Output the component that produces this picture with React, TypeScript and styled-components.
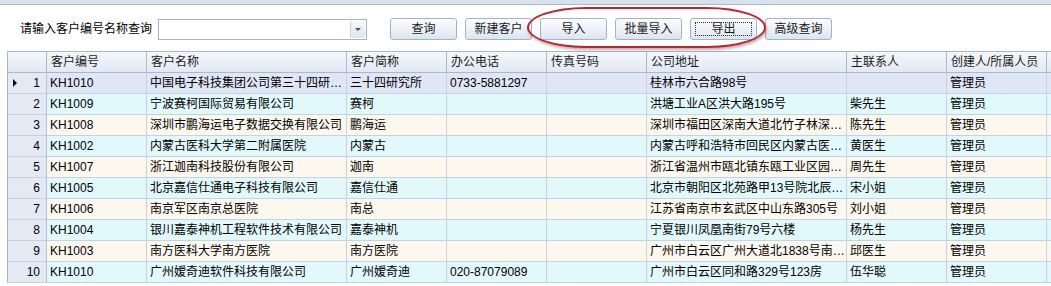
import React from 'react';
import styled, { createGlobalStyle } from 'styled-components';

const GlobalStyle = createGlobalStyle`
	html, body {
		margin: 0;
		padding: 0;
		background: #fff;
		overflow: hidden;
	}
	body {
		font-family: Tahoma, 'Liberation Sans', 'Noto Sans CJK SC', sans-serif;
		font-size: 12px;
		color: #000;
	}
`;

const Page = styled.div`
	width: 1051px;
	height: 286px;
	overflow: hidden;
	display: flex;
	flex-direction: column;
`;

const TopStrip = styled.div`
	height: 4px;
	background: #d8e2ee;
	border-bottom: 1px solid #a9b9cd;
`;

const Toolbar = styled.div`
	position: relative;
	display: flex;
	align-items: center;
	padding: 13px 0 11px 20px;
	height: 22px;
`;

const Label = styled.span`
	line-height: 22px;
	margin-right: 6px;
	white-space: nowrap;
`;

const Combo = styled.div`
	width: 209px;
	height: 21px;
	box-sizing: border-box;
	border: 1px solid #a3b4ca;
	background: #fff;
	display: flex;
	justify-content: flex-end;
	padding: 1px;
	margin-right: 23px;
`;

const ComboArrow = styled.div`
	width: 15px;
	height: 100%;
	box-sizing: border-box;
	border-left: 1px solid #c6d2e0;
	background: linear-gradient(#f6f8fb, #dfe6ef);
	display: flex;
	align-items: center;
	justify-content: center;

	&::after {
		content: '';
		border-left: 3px solid transparent;
		border-right: 3px solid transparent;
		border-top: 3px solid #4a5568;
	}
`;

const Buttons = styled.div`
	display: flex;
	gap: 8px;
`;

const Button = styled.button<{ $focused?: boolean }>`
	position: relative;
	width: 67px;
	height: 22px;
	box-sizing: border-box;
	border: 1px solid #a2b3c9;
	border-radius: 3px;
	background: linear-gradient(#fbfcfe, #eef2f8 50%, #dbe4ef);
	font: inherit;
	color: #1a1a1a;
	padding: 0;
	line-height: 20px;

	${(p) =>
		p.$focused &&
		`
		&::after {
			content: '';
			position: absolute;
			inset: 3px 4px;
			border: 1px dotted #333;
		}
	`}
`;

const Highlight = styled.div`
	position: absolute;
	left: 527px;
	top: 2px;
	width: 239px;
	height: 41px;
	box-sizing: border-box;
	border: 2px solid #c3232c;
	border-radius: 60px / 21px;
	box-shadow: 1px 2px 3px rgba(90, 90, 90, 0.45);
	pointer-events: none;
`;

const columns = '39px 100px 200px 100px 100px 100px 200px 100px 100px 100px';

const Grid = styled.div`
	margin-left: 7px;
	display: grid;
	grid-template-columns: ${columns};
	grid-auto-rows: 21px;
	border-top: 1px solid #a6b6cb;
	border-left: 1px solid #a6b6cb;
	width: max-content;
`;

const HeadCell = styled.div`
	box-sizing: border-box;
	background: linear-gradient(#f4f7fb, #e2e9f2);
	border-right: 1px solid #a9b8cc;
	border-bottom: 1px solid #a9b8cc;
	padding: 0 0 0 4px;
	line-height: 20px;
	white-space: nowrap;
	overflow: hidden;
	color: #1b1b1b;
`;

type RowKind = 'selected' | 'cyan' | 'beige';

const rowColors: Record<RowKind, string> = {
	selected: '#dfe6f5',
	cyan: '#e2f9fb',
	beige: '#fdf8ee',
};

const IndexCell = styled.div`
	box-sizing: border-box;
	background: #e3eaf4;
	border-right: 1px solid #b2c2d6;
	border-bottom: 1px solid #c3d1e1;
	padding: 0 6px 0 5px;
	line-height: 20px;
	display: flex;
	justify-content: space-between;
	align-items: center;
`;

const Marker = styled.span`
	width: 0;
	height: 0;
	border-top: 4px solid transparent;
	border-bottom: 4px solid transparent;
	border-left: 4px solid #111;
`;

const Cell = styled.div<{ $kind: RowKind }>`
	box-sizing: border-box;
	background: ${(p) => rowColors[p.$kind]};
	border-right: 1px solid #c2d3e5;
	border-bottom: 1px solid #c2d3e5;
	padding: 0 0 0 3px;
	line-height: 20px;
	white-space: nowrap;
	overflow: hidden;
	text-overflow: ellipsis;
`;

const headers = ['客户编号', '客户名称', '客户简称', '办公电话', '传真号码', '公司地址', '主联系人', '创建人/所属人员', ''];

const rows = [
	['KH1010', '中国电子科技集团公司第三十四研究所', '三十四研究所', '0733-5881297', '', '桂林市六合路98号', '', '管理员'],
	['KH1009', '宁波赛柯国际贸易有限公司', '赛柯', '', '', '洪塘工业A区洪大路195号', '柴先生', '管理员'],
	['KH1008', '深圳市鹏海运电子数据交换有限公司', '鹏海运', '', '', '深圳市福田区深南大道北竹子林深业大厦', '陈先生', '管理员'],
	['KH1002', '内蒙古医科大学第二附属医院', '内蒙古', '', '', '内蒙古呼和浩特市回民区内蒙古医科大学', '黄医生', '管理员'],
	['KH1007', '浙江迦南科技股份有限公司', '迦南', '', '', '浙江省温州市瓯北镇东瓯工业区园区路', '周先生', '管理员'],
	['KH1005', '北京嘉信仕通电子科技有限公司', '嘉信仕通', '', '', '北京市朝阳区北苑路甲13号院北辰泰岳大厦', '宋小姐', '管理员'],
	['KH1006', '南京军区南京总医院', '南总', '', '', '江苏省南京市玄武区中山东路305号', '刘小姐', '管理员'],
	['KH1004', '银川嘉泰神机工程软件技术有限公司', '嘉泰神机', '', '', '宁夏银川凤凰南街79号六楼', '杨先生', '管理员'],
	['KH1003', '南方医科大学南方医院', '南方医院', '', '', '广州市白云区广州大道北1838号南方医院', '邱医生', '管理员'],
	['KH1010', '广州嫒奇迪软件科技有限公司', '广州嫒奇迪', '020-87079089', '', '广州市白云区同和路329号123房', '伍华聪', '管理员'],
];

const kindOf = (i: number): RowKind => (i === 0 ? 'selected' : i % 2 === 1 ? 'cyan' : 'beige');

export default function App() {
	return (
		<>
			<GlobalStyle />
			<Page>
				<TopStrip />
				<Toolbar>
					<Label>请输入客户编号名称查询</Label>
					<Combo>
						<ComboArrow />
					</Combo>
					<Buttons>
						<Button>查询</Button>
						<Button>新建客户</Button>
						<Button>导入</Button>
						<Button>批量导入</Button>
						<Button $focused>导出</Button>
						<Button>高级查询</Button>
					</Buttons>
					<Highlight />
				</Toolbar>
				<Grid>
					<HeadCell />
					{headers.map((h, i) => (
						<HeadCell key={i}>{h}</HeadCell>
					))}
					{rows.map((r, i) => (
						<React.Fragment key={i}>
							<IndexCell>
								{i === 0 ? <Marker /> : <span />}
								<span>{i + 1}</span>
							</IndexCell>
							{r.map((c, j) => (
								<Cell key={j} $kind={kindOf(i)}>
									{c}
								</Cell>
							))}
							<Cell $kind={kindOf(i)} />
						</React.Fragment>
					))}
				</Grid>
			</Page>
		</>
	);
}
